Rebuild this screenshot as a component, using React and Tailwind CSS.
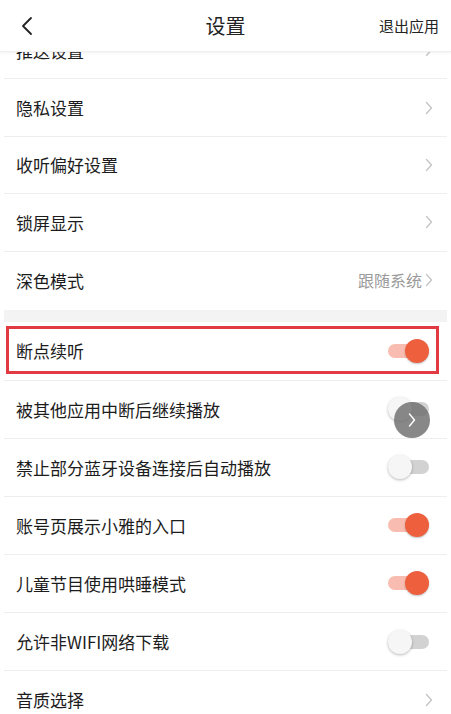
import React from "react";

const Chevron = () => (
  <svg width="8" height="14" viewBox="0 0 8 14" className="shrink-0">
    <polyline points="1.5,1.5 6.5,7 1.5,12.5" fill="none" stroke="#c4c4c4" strokeWidth="1.3" strokeLinecap="round" strokeLinejoin="round" />
  </svg>
);

const Toggle = ({ on }) => (
  <div className="relative w-[41px] h-[24px] shrink-0 mr-[4px]">
    <div className={`absolute left-0 right-0 top-[5px] h-[14px] rounded-full ${on ? "bg-[#f8bdb0]" : "bg-[#d2d2d2]"}`} />
    <div
      className={`absolute top-0 w-[24px] h-[24px] rounded-full ${on ? "right-0 bg-[#ee5f3e] shadow-[0_1px_2px_rgba(0,0,0,0.25)]" : "left-0 bg-[#f6f6f6] shadow-[0_1px_3px_rgba(0,0,0,0.28)]"}`}
    />
  </div>
);

const Row = ({ label, right, h = "h-[57.4px]", border = true, children }) => (
  <div className={`relative flex items-center justify-between pl-[12px] pr-[14px] ${h} ${border ? "border-b border-[#eeeeee]" : ""}`}>
    <span className="text-[17px] text-[#1c1c1c] leading-none">{label}</span>
    {right}
    {children}
  </div>
);

export default function App() {
  return (
    <div
      className="relative w-[451px] h-[714px] overflow-hidden bg-white"
      style={{ fontFamily: '"Noto Sans CJK SC", "Noto Sans", sans-serif' }}
    >
      <div className="relative z-10 h-[52px] bg-white flex items-center justify-between px-[18px] shadow-[0_1px_2px_rgba(0,0,0,0.06)] border-b border-[#f0f0f0]">
        <svg width="14" height="20" viewBox="0 0 14 20" className="ml-[2px]">
          <polyline points="11,2 3,10 11,18" fill="none" stroke="#222" strokeWidth="1.8" strokeLinecap="round" strokeLinejoin="round" />
        </svg>
        <span className="absolute left-0 right-0 text-center text-[20px] text-[#222] leading-none pointer-events-none">设置</span>
        <span className="text-[15px] text-[#222] leading-none -mr-[6px]">退出应用</span>
      </div>

      <div className="mx-[4px] -mt-[30px]">
        <Row label="推送设置" right={<Chevron />} />
        <Row label="隐私设置" right={<Chevron />} />
        <Row label="收听偏好设置" right={<Chevron />} />
        <Row label="锁屏显示" right={<Chevron />} />
        <Row
          label="深色模式"
          border={false}
          right={
            <div className="flex items-center gap-[3px]">
              <span className="text-[16px] text-[#9a9a9a] leading-none">跟随系统</span>
              <Chevron />
            </div>
          }
        />
        <div className="h-[12px] mt-[1px] bg-[#f3f3f3]" />
        <Row label="断点续听" h="h-[59px]" right={<Toggle on />}>
          <div className="absolute left-[2px] right-[8px] top-[4px] bottom-[6px] border-[3px] border-[#e13a42] pointer-events-none" />
        </Row>
        <Row label="被其他应用中断后继续播放" h="h-[58px]" right={<Toggle on={false} />}>
          <div className="absolute right-[17px] top-[21px] w-[36px] h-[36px] rounded-full bg-[rgba(110,110,110,0.82)] flex items-center justify-center">
            <svg width="10" height="16" viewBox="0 0 10 16">
              <polyline points="2.5,2 7.5,8 2.5,14" fill="none" stroke="#fff" strokeWidth="1.4" strokeLinecap="round" strokeLinejoin="round" />
            </svg>
          </div>
        </Row>
        <Row label="禁止部分蓝牙设备连接后自动播放" h="h-[58px]" right={<Toggle on={false} />} />
        <Row label="账号页展示小雅的入口" h="h-[58px]" right={<Toggle on />} />
        <Row label="儿童节目使用哄睡模式" h="h-[58px]" right={<Toggle on />} />
        <Row label="允许非WIFI网络下载" h="h-[58.3px]" right={<Toggle on={false} />} />
        <Row label="音质选择" h="h-[58px]" right={<Chevron />} />
      </div>
    </div>
  );
}
